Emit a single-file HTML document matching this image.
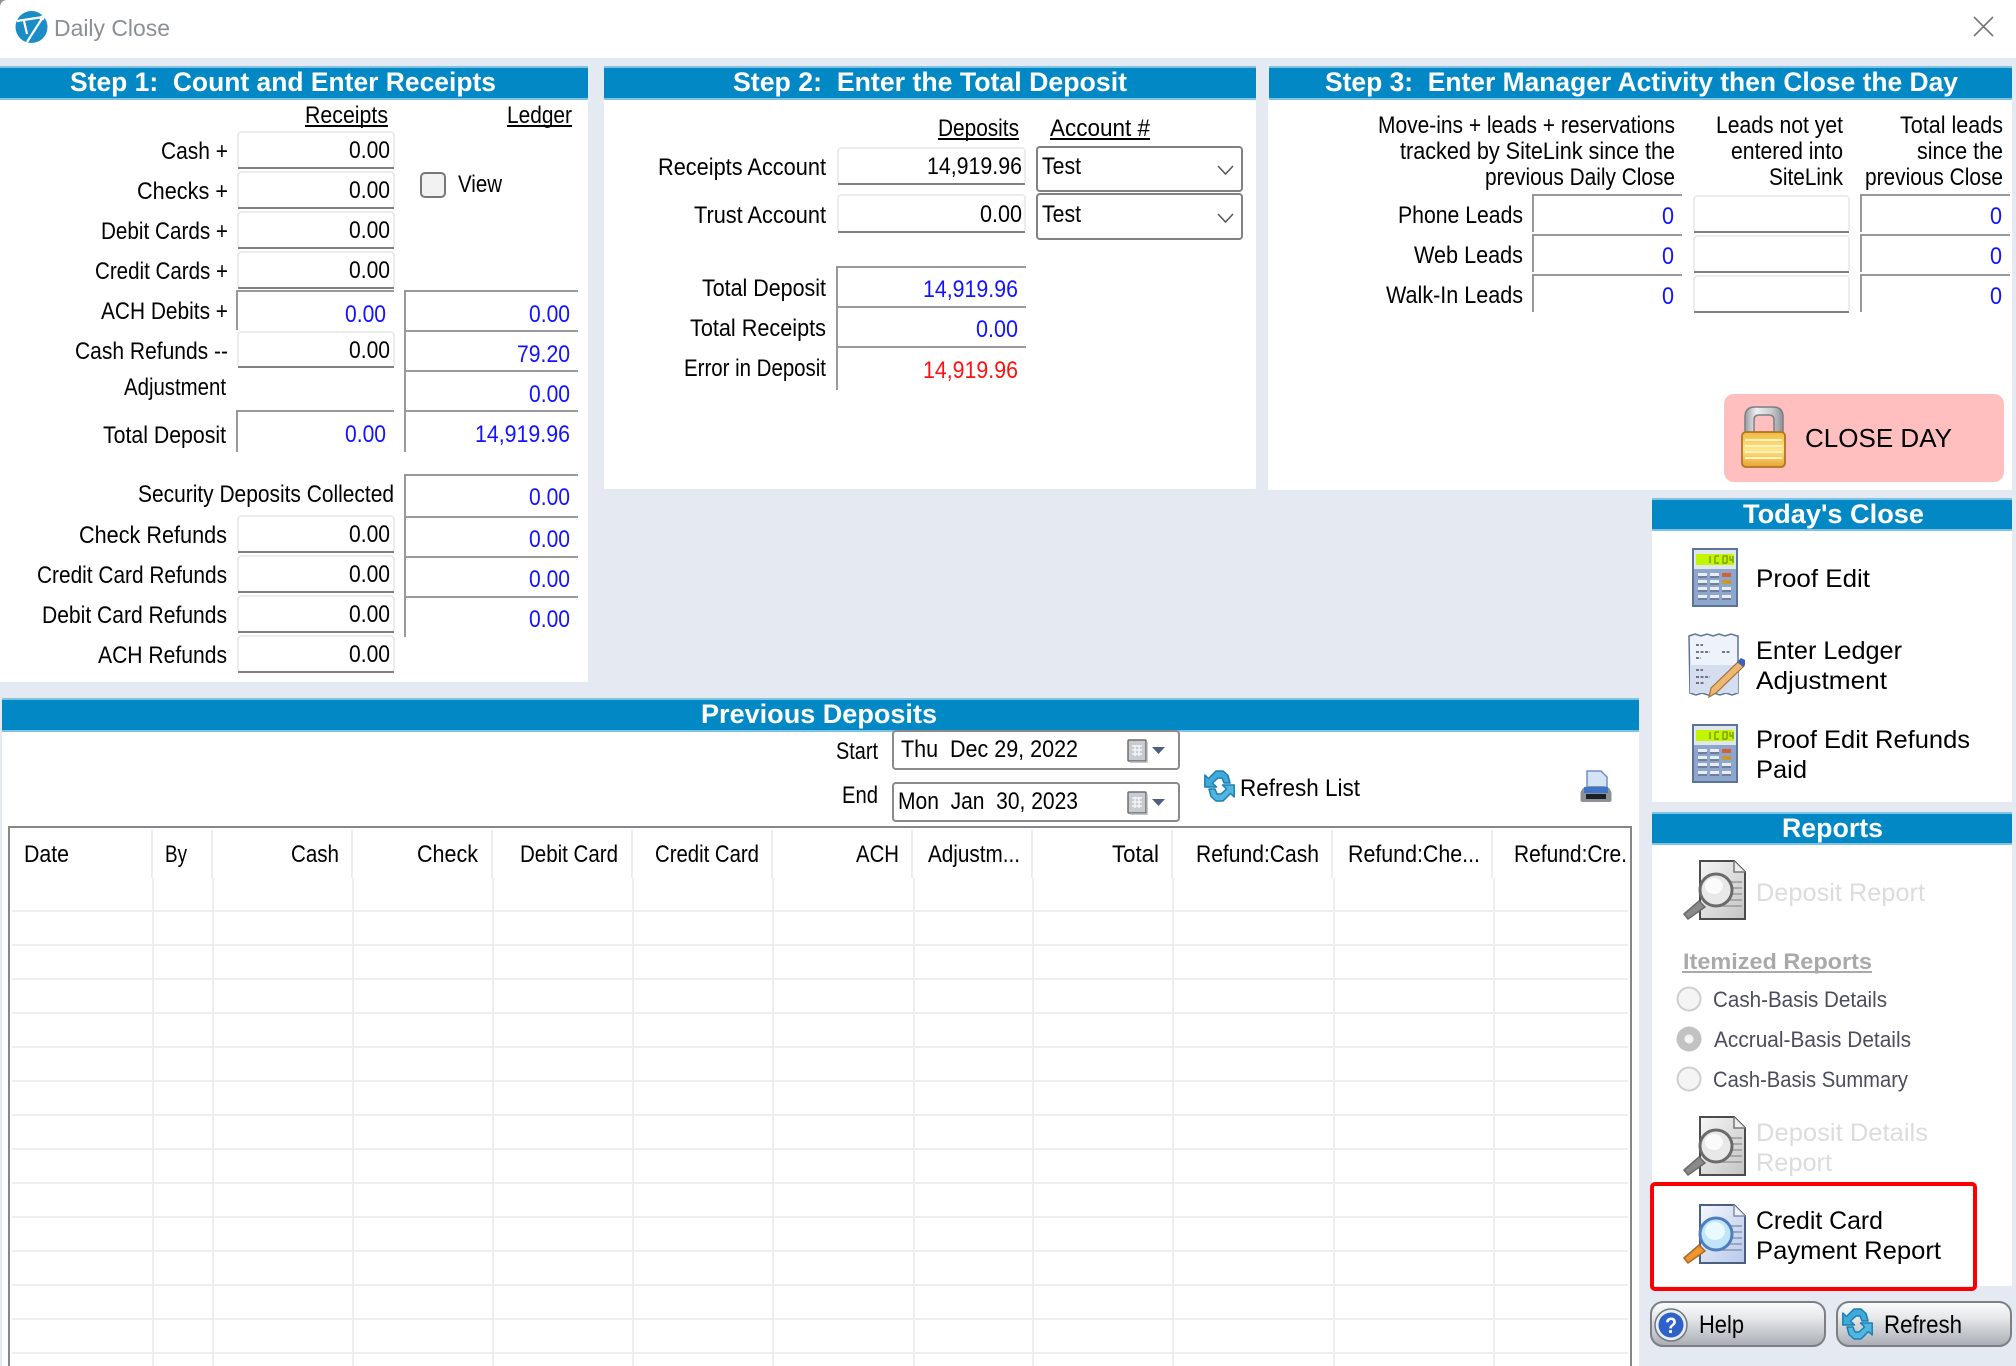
<!DOCTYPE html>
<html><head><meta charset="utf-8"><title>Daily Close</title>
<style>
html,body{margin:0;padding:0;background:#e4e9f2;width:2016px;height:1366px;overflow:hidden}
svg{display:block;position:absolute;left:0;top:0}
text{font-family:"Liberation Sans",Arial,sans-serif;font-size:24px;fill:#000;white-space:pre}
.h{font-size:27px;font-weight:700;fill:#fff}
.l{font-size:25px}
.b{fill:#1212ff}
.r{fill:#ff1010}
.d{font-size:25px;fill:#dcdcdc}
.g{font-size:22px;fill:#4c4c5c}
.hd{fill:#0288c5}
.edge{fill:#7fc2e2}
.ln{fill:#999}
.grid{fill:#eeeeee}
.inp{fill:#fff;stroke:#ececec;stroke-width:2}
.inb{fill:#808080}
</style></head><body>
<svg xmlns="http://www.w3.org/2000/svg" width="2016" height="1366" viewBox="0 0 2016 1366">
<defs>
<linearGradient id="btn" x1="0" y1="0" x2="0" y2="1"><stop offset="0" stop-color="#fbfcfc"/><stop offset=".35" stop-color="#e6e8ea"/><stop offset="1" stop-color="#a9adb3"/></linearGradient>
<linearGradient id="gold" x1="0" y1="0" x2="0" y2="1"><stop offset="0" stop-color="#f0b83c"/><stop offset=".5" stop-color="#fde68a"/><stop offset="1" stop-color="#e8a330"/></linearGradient>
<linearGradient id="steel" x1="0" y1="0" x2="1" y2="0"><stop offset="0" stop-color="#9a9ea2"/><stop offset=".3" stop-color="#eef0f2"/><stop offset=".7" stop-color="#c9cccf"/><stop offset="1" stop-color="#8d9195"/></linearGradient>
<linearGradient id="doccol" x1="0" y1="0" x2="1" y2="1"><stop offset="0" stop-color="#f4f7fd"/><stop offset="1" stop-color="#b7c8ea"/></linearGradient>
<linearGradient id="docgr" x1="0" y1="0" x2="1" y2="1"><stop offset="0" stop-color="#f6f6f6"/><stop offset="1" stop-color="#c4c4c4"/></linearGradient>
<g id="calc">
<rect x="0" y="0" width="46" height="59" fill="#5c7497"/>
<rect x="2" y="2" width="42" height="19" fill="#dfe6ee"/>
<rect x="4" y="6" width="38" height="11" fill="#c4f500"/>
<path d="M18 8v7M23 8v7h4M27 8h-4M31 8v7h4M31 8h4v7M38 8v4h3M41 8v7" stroke="#7da200" stroke-width="1.5" fill="none"/>
<rect x="2" y="21" width="42" height="36" fill="#8ea6cb"/>
<g fill="#e8edf5">
<rect x="6" y="25" width="9" height="4"/><rect x="18" y="25" width="9" height="4"/>
<rect x="6" y="32" width="9" height="4"/><rect x="18" y="32" width="9" height="4"/>
<rect x="6" y="39" width="9" height="4"/><rect x="18" y="39" width="9" height="4"/><rect x="30" y="39" width="9" height="4"/>
<rect x="6" y="47" width="9" height="4"/><rect x="18" y="47" width="9" height="4"/><rect x="30" y="47" width="9" height="4"/>
</g>
<g fill="#6d7f9c">
<rect x="6" y="28" width="9" height="2"/><rect x="18" y="28" width="9" height="2"/>
<rect x="6" y="35" width="9" height="2"/><rect x="18" y="35" width="9" height="2"/>
<rect x="6" y="42" width="9" height="2"/><rect x="18" y="42" width="9" height="2"/><rect x="30" y="42" width="9" height="2"/>
<rect x="6" y="50" width="9" height="2"/><rect x="18" y="50" width="9" height="2"/><rect x="30" y="50" width="9" height="2"/>
</g>
<rect x="30" y="25" width="9" height="4" fill="#d8602c"/>
<rect x="30" y="32" width="9" height="4" fill="#c89a2c"/>
</g>
<g id="magg">
<path d="M16 1H50L61 12V59H16Z" fill="url(#docgr)" stroke="#4c4c4c" stroke-width="2"/>
<path d="M50 1V12H61" fill="#eee" stroke="#777" stroke-width="1.5"/>
<path d="M40 22H58M44 28H58M46 34H58M44 40H58M28 46H58" stroke="#999" stroke-width="1.5" fill="none"/>
<path d="M0 54L4 59L21 47L15 41Z" fill="#8a8a8a" stroke="#6a6a6a" stroke-width="1.5"/>
<circle cx="32" cy="30" r="16" fill="#e8e8e8" stroke="#6a6a6a" stroke-width="3"/>
<ellipse cx="30" cy="26" rx="9" ry="8" fill="#fbfbfb"/>
</g>
<g id="magc">
<path d="M16 1H50L61 12V59H16Z" fill="url(#doccol)" stroke="#4b5f80" stroke-width="2"/>
<path d="M50 1V12H61" fill="#eef2fa" stroke="#7d8daa" stroke-width="1.5"/>
<path d="M40 22H58M44 28H58M46 34H58M44 40H58M28 46H58" stroke="#8797b3" stroke-width="1.5" fill="none"/>
<path d="M0 54L4 59L21 47L15 41Z" fill="#f0962c" stroke="#a8682a" stroke-width="1.5"/>
<circle cx="32" cy="30" r="16" fill="#bfe6f8" stroke="#4f7dbd" stroke-width="3"/>
<ellipse cx="31" cy="27" rx="10" ry="9" fill="#e9f9fe"/>
</g>
<g id="rfr">
<path id="rfa" d="M0.800 5L0.800 17L12.500 17L8.500 13L14 8L18 8L20 13L26 13L24 5.500L19 1L12 1L4.500 8.500Z" fill="#3fa9d8" stroke="#1c7fb0" stroke-width="1.5" stroke-linejoin="round"/>
<path d="M0.800 5L0.800 17L12.500 17L8.500 13L14 8L18 8L20 13L26 13L24 5.500L19 1L12 1L4.500 8.500Z" transform="rotate(180 15.500 16)" fill="#4fb6e2" stroke="#1c7fb0" stroke-width="1.5" stroke-linejoin="round"/>
</g>
<g id="cal">
<rect x="1" y="1" width="18" height="21" rx="1" fill="#c8ccd0" stroke="#6e6e6e" stroke-width="1.5"/>
<path d="M3 23H20V3" fill="none" stroke="#b5b5b5" stroke-width="1.5"/>
<path d="M5 7h10M5 11h10M5 15h10M8 6v11M12 6v11" stroke="#f4f4f4" stroke-width="1.5"/>
</g>
</defs>

<!-- background and panels -->
<rect width="2016" height="1366" fill="#e4e9f2"/>
<rect width="2016" height="58" fill="#fff"/>
<path d="M0 8Q0 0 8 0H0Z" fill="#8f9398"/>
<rect x="0" y="99" width="588" height="583" fill="#fff"/>
<rect x="604" y="99" width="652" height="390" fill="#fff"/>
<rect x="1268" y="99" width="744" height="391" fill="#fff"/>
<rect x="1652" y="531" width="360" height="271" fill="#fff"/>
<rect x="1652" y="845" width="360" height="441" fill="#fff"/>
<rect x="2" y="732" width="1637" height="634" fill="#fff"/>

<!-- headers -->
<rect class="edge" x="0" y="66" width="588" height="34"/><rect class="hd" x="0" y="68" width="588" height="30"/>
<rect class="edge" x="604" y="66" width="652" height="34"/><rect class="hd" x="604" y="68" width="652" height="30"/>
<rect class="edge" x="1269" y="66" width="743" height="34"/><rect class="hd" x="1269" y="68" width="743" height="30"/>
<rect class="edge" x="1652" y="498" width="360" height="33"/><rect class="hd" x="1652" y="500" width="360" height="29"/>
<rect class="edge" x="1652" y="812" width="360" height="33"/><rect class="hd" x="1652" y="814" width="360" height="29"/>
<rect class="edge" x="2" y="698" width="1637" height="34"/><rect class="hd" x="2" y="700" width="1637" height="30"/>

<text class="h" x="70" y="91" textLength="426" lengthAdjust="spacingAndGlyphs">Step 1:  Count and Enter Receipts</text>
<text class="h" x="733" y="91" textLength="394" lengthAdjust="spacingAndGlyphs">Step 2:  Enter the Total Deposit</text>
<text class="h" x="1325" y="91" textLength="633" lengthAdjust="spacingAndGlyphs">Step 3:  Enter Manager Activity then Close the Day</text>
<text class="h" x="1743" y="523" textLength="181" lengthAdjust="spacingAndGlyphs">Today's Close</text>
<text class="h" x="1782" y="837" textLength="101" lengthAdjust="spacingAndGlyphs">Reports</text>
<text class="h" x="701" y="723" textLength="236" lengthAdjust="spacingAndGlyphs">Previous Deposits</text>

<!-- title bar -->
<circle cx="31.500" cy="27" r="16" fill="#1a8cc6"/>
<path d="M17 21L43 17L27 42M24 21L27 34" fill="none" stroke="#fff" stroke-width="2.200"/>
<circle cx="42" cy="18" r="2.500" fill="#fff"/>
<text x="54" y="36" textLength="116" lengthAdjust="spacingAndGlyphs" style="font-size:23px;fill:#8a8f94">Daily Close</text>
<path d="M1974 17L1993 36M1993 17L1974 36" stroke="#777" stroke-width="1.600" fill="none"/>

<!-- STEP 1 -->
<text x="305" y="123" textLength="83" lengthAdjust="spacingAndGlyphs">Receipts</text><rect x="305" y="125" width="83" height="2"/>
<text x="507" y="123" textLength="65" lengthAdjust="spacingAndGlyphs">Ledger</text><rect x="507" y="125" width="65" height="2"/>

<text x="161" y="159" textLength="67" lengthAdjust="spacingAndGlyphs">Cash +</text>
<text x="137" y="199" textLength="91" lengthAdjust="spacingAndGlyphs">Checks +</text>
<text x="101" y="239" textLength="127" lengthAdjust="spacingAndGlyphs">Debit Cards +</text>
<text x="95" y="279" textLength="133" lengthAdjust="spacingAndGlyphs">Credit Cards +</text>
<text x="101" y="319" textLength="127" lengthAdjust="spacingAndGlyphs">ACH Debits +</text>
<text x="75" y="359" textLength="153" lengthAdjust="spacingAndGlyphs">Cash Refunds --</text>
<text x="124" y="395" textLength="102" lengthAdjust="spacingAndGlyphs">Adjustment</text>
<text x="103" y="443" textLength="123" lengthAdjust="spacingAndGlyphs">Total Deposit</text>
<text x="138" y="502" textLength="256" lengthAdjust="spacingAndGlyphs">Security Deposits Collected</text>
<text x="79" y="543" textLength="148" lengthAdjust="spacingAndGlyphs">Check Refunds</text>
<text x="37" y="583" textLength="190" lengthAdjust="spacingAndGlyphs">Credit Card Refunds</text>
<text x="42" y="623" textLength="185" lengthAdjust="spacingAndGlyphs">Debit Card Refunds</text>
<text x="98" y="663" textLength="129" lengthAdjust="spacingAndGlyphs">ACH Refunds</text>

<!-- step 1 inputs -->
<g>
<rect class="inp" x="238" y="132" width="156" height="36" rx="3"/><rect class="inb" x="238" y="167" width="156" height="2"/>
<rect class="inp" x="238" y="172" width="156" height="36" rx="3"/><rect class="inb" x="238" y="207" width="156" height="2"/>
<rect class="inp" x="238" y="212" width="156" height="36" rx="3"/><rect class="inb" x="238" y="247" width="156" height="2"/>
<rect class="inp" x="238" y="252" width="156" height="36" rx="3"/><rect class="inb" x="238" y="287" width="156" height="2"/>
<rect class="inp" x="238" y="332" width="156" height="35" rx="3"/><rect class="inb" x="238" y="366" width="156" height="2"/>
<rect class="inp" x="238" y="516" width="156" height="36" rx="3"/><rect class="inb" x="238" y="551" width="156" height="2"/>
<rect class="inp" x="238" y="556" width="156" height="36" rx="3"/><rect class="inb" x="238" y="591" width="156" height="2"/>
<rect class="inp" x="238" y="596" width="156" height="36" rx="3"/><rect class="inb" x="238" y="631" width="156" height="2"/>
<rect class="inp" x="238" y="636" width="156" height="36" rx="3"/><rect class="inb" x="238" y="671" width="156" height="2"/>
</g>
<text x="349" y="158" textLength="41" lengthAdjust="spacingAndGlyphs">0.00</text>
<text x="349" y="198" textLength="41" lengthAdjust="spacingAndGlyphs">0.00</text>
<text x="349" y="238" textLength="41" lengthAdjust="spacingAndGlyphs">0.00</text>
<text x="349" y="278" textLength="41" lengthAdjust="spacingAndGlyphs">0.00</text>
<text x="349" y="358" textLength="41" lengthAdjust="spacingAndGlyphs">0.00</text>
<text x="349" y="542" textLength="41" lengthAdjust="spacingAndGlyphs">0.00</text>
<text x="349" y="582" textLength="41" lengthAdjust="spacingAndGlyphs">0.00</text>
<text x="349" y="622" textLength="41" lengthAdjust="spacingAndGlyphs">0.00</text>
<text x="349" y="662" textLength="41" lengthAdjust="spacingAndGlyphs">0.00</text>

<!-- view checkbox -->
<rect x="421" y="173" width="24" height="24" rx="4" fill="#f2f2f2" stroke="#777" stroke-width="2"/>
<text x="458" y="192" textLength="44" lengthAdjust="spacingAndGlyphs">View</text>

<!-- step 1 read-only boxes -->
<rect class="ln" x="236" y="290" width="158" height="2"/><rect class="ln" x="236" y="290" width="2" height="40"/>
<rect class="ln" x="236" y="410" width="158" height="2"/><rect class="ln" x="236" y="410" width="2" height="42"/>
<text class="b" x="345" y="322" textLength="41" lengthAdjust="spacingAndGlyphs">0.00</text>
<text class="b" x="345" y="442" textLength="41" lengthAdjust="spacingAndGlyphs">0.00</text>

<rect class="ln" x="404" y="290" width="174" height="2"/><rect class="ln" x="404" y="330" width="174" height="2"/><rect class="ln" x="404" y="370" width="174" height="2"/><rect class="ln" x="404" y="410" width="174" height="2"/><rect class="ln" x="404" y="290" width="2" height="162"/>
<text class="b" x="529" y="322" textLength="41" lengthAdjust="spacingAndGlyphs">0.00</text>
<text class="b" x="517" y="362" textLength="53" lengthAdjust="spacingAndGlyphs">79.20</text>
<text class="b" x="529" y="402" textLength="41" lengthAdjust="spacingAndGlyphs">0.00</text>
<text class="b" x="475" y="442" textLength="95" lengthAdjust="spacingAndGlyphs">14,919.96</text>

<rect class="ln" x="404" y="474" width="174" height="2"/><rect class="ln" x="404" y="516" width="174" height="2"/><rect class="ln" x="404" y="556" width="174" height="2"/><rect class="ln" x="404" y="596" width="174" height="2"/><rect class="ln" x="404" y="474" width="2" height="163"/>
<text class="b" x="529" y="505" textLength="41" lengthAdjust="spacingAndGlyphs">0.00</text>
<text class="b" x="529" y="547" textLength="41" lengthAdjust="spacingAndGlyphs">0.00</text>
<text class="b" x="529" y="587" textLength="41" lengthAdjust="spacingAndGlyphs">0.00</text>
<text class="b" x="529" y="627" textLength="41" lengthAdjust="spacingAndGlyphs">0.00</text>

<!-- STEP 2 -->
<text x="938" y="136" textLength="81" lengthAdjust="spacingAndGlyphs">Deposits</text><rect x="938" y="138" width="81" height="2"/>
<text x="1050" y="136" textLength="100" lengthAdjust="spacingAndGlyphs">Account #</text><rect x="1050" y="138" width="100" height="2"/>
<text x="658" y="175" textLength="168" lengthAdjust="spacingAndGlyphs">Receipts Account</text>
<text x="694" y="223" textLength="132" lengthAdjust="spacingAndGlyphs">Trust Account</text>
<rect class="inp" x="838" y="148" width="187" height="36" rx="3"/><rect class="inb" x="838" y="183" width="187" height="2"/>
<rect class="inp" x="838" y="195" width="187" height="37" rx="3"/><rect class="inb" x="838" y="231" width="187" height="2"/>
<text x="927" y="174" textLength="95" lengthAdjust="spacingAndGlyphs">14,919.96</text>
<text x="980" y="222" textLength="42" lengthAdjust="spacingAndGlyphs">0.00</text>
<rect x="1037" y="147" width="205" height="44" rx="3" fill="#fff" stroke="#808080" stroke-width="2"/>
<rect x="1037" y="194" width="205" height="45" rx="3" fill="#fff" stroke="#808080" stroke-width="2"/>
<text x="1042" y="174" textLength="39" lengthAdjust="spacingAndGlyphs">Test</text>
<text x="1042" y="222" textLength="39" lengthAdjust="spacingAndGlyphs">Test</text>
<path d="M1218 166L1225.500 174L1233 166M1218 214L1225.500 222L1233 214" fill="none" stroke="#555" stroke-width="1.500"/>

<rect class="ln" x="836" y="266" width="190" height="2"/><rect class="ln" x="836" y="306" width="190" height="2"/><rect class="ln" x="836" y="346" width="190" height="2"/><rect class="ln" x="836" y="266" width="2" height="124"/>
<text x="702" y="296" textLength="124" lengthAdjust="spacingAndGlyphs">Total Deposit</text>
<text x="690" y="336" textLength="136" lengthAdjust="spacingAndGlyphs">Total Receipts</text>
<text x="684" y="376" textLength="142" lengthAdjust="spacingAndGlyphs">Error in Deposit</text>
<text class="b" x="923" y="297" textLength="95" lengthAdjust="spacingAndGlyphs">14,919.96</text>
<text class="b" x="976" y="337" textLength="42" lengthAdjust="spacingAndGlyphs">0.00</text>
<text class="r" x="923" y="378" textLength="95" lengthAdjust="spacingAndGlyphs">14,919.96</text>

<!-- STEP 3 -->
<text x="1378" y="133" textLength="297" lengthAdjust="spacingAndGlyphs">Move-ins + leads + reservations</text>
<text x="1400" y="159" textLength="275" lengthAdjust="spacingAndGlyphs">tracked by SiteLink since the</text>
<text x="1485" y="185" textLength="190" lengthAdjust="spacingAndGlyphs">previous Daily Close</text>
<text x="1716" y="133" textLength="127" lengthAdjust="spacingAndGlyphs">Leads not yet</text>
<text x="1731" y="159" textLength="112" lengthAdjust="spacingAndGlyphs">entered into</text>
<text x="1769" y="185" textLength="74" lengthAdjust="spacingAndGlyphs">SiteLink</text>
<text x="1900" y="133" textLength="103" lengthAdjust="spacingAndGlyphs">Total leads</text>
<text x="1917" y="159" textLength="86" lengthAdjust="spacingAndGlyphs">since the</text>
<text x="1865" y="185" textLength="138" lengthAdjust="spacingAndGlyphs">previous Close</text>
<text x="1398" y="223" textLength="125" lengthAdjust="spacingAndGlyphs">Phone Leads</text>
<text x="1414" y="263" textLength="109" lengthAdjust="spacingAndGlyphs">Web Leads</text>
<text x="1386" y="303" textLength="137" lengthAdjust="spacingAndGlyphs">Walk-In Leads</text>
<g class="ln">
<rect x="1532" y="194" width="150" height="2"/><rect x="1532" y="194" width="2" height="38"/>
<rect x="1532" y="234" width="150" height="2"/><rect x="1532" y="234" width="2" height="38"/>
<rect x="1532" y="274" width="150" height="2"/><rect x="1532" y="274" width="2" height="38"/>
<rect x="1860" y="194" width="150" height="2"/><rect x="1860" y="194" width="2" height="38"/>
<rect x="1860" y="234" width="150" height="2"/><rect x="1860" y="234" width="2" height="38"/>
<rect x="1860" y="274" width="150" height="2"/><rect x="1860" y="274" width="2" height="38"/>
</g>
<text class="b" x="1662" y="224" textLength="12" lengthAdjust="spacingAndGlyphs">0</text>
<text class="b" x="1662" y="264" textLength="12" lengthAdjust="spacingAndGlyphs">0</text>
<text class="b" x="1662" y="304" textLength="12" lengthAdjust="spacingAndGlyphs">0</text>
<text class="b" x="1990" y="224" textLength="12" lengthAdjust="spacingAndGlyphs">0</text>
<text class="b" x="1990" y="264" textLength="12" lengthAdjust="spacingAndGlyphs">0</text>
<text class="b" x="1990" y="304" textLength="12" lengthAdjust="spacingAndGlyphs">0</text>
<rect class="inp" x="1694" y="196" width="155" height="36" rx="3"/><rect class="inb" x="1694" y="231" width="155" height="2"/>
<rect class="inp" x="1694" y="236" width="155" height="36" rx="3"/><rect class="inb" x="1694" y="271" width="155" height="2"/>
<rect class="inp" x="1694" y="276" width="155" height="36" rx="3"/><rect class="inb" x="1694" y="311" width="155" height="2"/>

<!-- close day -->
<rect x="1724" y="394" width="280" height="88" rx="10" fill="#ffbfbf"/>
<path d="M1745 433V417Q1745 407 1755 407H1773Q1783 407 1783 417V433H1774V420Q1774 415 1769 415H1759Q1754 415 1754 420V433Z" fill="url(#steel)" stroke="#7b7f83" stroke-width="1.500"/>
<rect x="1742" y="432" width="43" height="35" rx="4" fill="url(#gold)" stroke="#b07424" stroke-width="1.800"/>
<path d="M1745 440H1782M1745 446H1782M1745 452H1782M1745 458H1782" stroke="#fff2bd" stroke-width="2"/>
<text x="1805" y="447" textLength="147" lengthAdjust="spacingAndGlyphs" style="font-size:26px">CLOSE DAY</text>

<!-- today's close -->
<use href="#calc" x="1692" y="548"/>
<text class="l" x="1756" y="587" textLength="114" lengthAdjust="spacingAndGlyphs">Proof Edit</text>
<path d="M1689 636l6 -2 6 2 6 -2 6 2 6 -2 6 2 6 -2 6 2 1 0V693l-6 2 -6 -2 -6 2 -6 -2 -6 2 -6 -2 -6 2 -6 -2Z" fill="#eef3fb" stroke="#5c7497" stroke-width="1.500"/>
<rect x="1690" y="665" width="48" height="28" fill="#d5deee"/>
<path d="M1696 645h7M1696 652h14M1696 658h5M1722 652h8M1696 670h7M1696 677h14M1696 683h8" stroke="#667" stroke-width="1.800" stroke-dasharray="3 1.500" fill="none"/>
<path d="M1709 697L1711 688L1739 661L1744 666L1716 693Z" fill="#eeb673" stroke="#a5702f" stroke-width="1.200"/>
<path d="M1737 662L1741 658L1745 660L1745 665L1743 667Z" fill="#3d63b8"/>
<text class="l" x="1756" y="659" textLength="146" lengthAdjust="spacingAndGlyphs">Enter Ledger</text>
<text class="l" x="1756" y="689" textLength="131" lengthAdjust="spacingAndGlyphs">Adjustment</text>
<use href="#calc" x="1692" y="724"/>
<text class="l" x="1756" y="748" textLength="214" lengthAdjust="spacingAndGlyphs">Proof Edit Refunds</text>
<text class="l" x="1756" y="778" textLength="51" lengthAdjust="spacingAndGlyphs">Paid</text>

<!-- reports -->
<use href="#magg" x="1684" y="860"/>
<text class="d" x="1756" y="901" textLength="169" lengthAdjust="spacingAndGlyphs">Deposit Report</text>
<text x="1683" y="969" textLength="189" lengthAdjust="spacingAndGlyphs" style="font-size:22px;font-weight:700;fill:#a9a9a9">Itemized Reports</text>
<rect x="1682" y="971" width="190" height="2" fill="#a9a9a9"/>
<circle cx="1689" cy="999" r="11.500" fill="#f4f4f4" stroke="#cfcfcf" stroke-width="2"/>
<circle cx="1689" cy="1039" r="12.500" fill="#c2c2c2"/><circle cx="1689" cy="1039" r="4.500" fill="#f4f4f4"/>
<circle cx="1689" cy="1079" r="11.500" fill="#f4f4f4" stroke="#cfcfcf" stroke-width="2"/>
<text class="g" x="1713" y="1007" textLength="174" lengthAdjust="spacingAndGlyphs">Cash-Basis Details</text>
<text class="g" x="1714" y="1047" textLength="197" lengthAdjust="spacingAndGlyphs">Accrual-Basis Details</text>
<text class="g" x="1713" y="1087" textLength="195" lengthAdjust="spacingAndGlyphs">Cash-Basis Summary</text>
<use href="#magg" x="1684" y="1116"/>
<text class="d" x="1756" y="1141" textLength="172" lengthAdjust="spacingAndGlyphs">Deposit Details</text>
<text class="d" x="1756" y="1171" textLength="76" lengthAdjust="spacingAndGlyphs">Report</text>
<use href="#magc" x="1684" y="1204"/>
<text class="l" x="1756" y="1229" textLength="127" lengthAdjust="spacingAndGlyphs">Credit Card</text>
<text class="l" x="1756" y="1259" textLength="185" lengthAdjust="spacingAndGlyphs">Payment Report</text>
<rect x="1652" y="1184" width="323" height="105" rx="3" fill="none" stroke="#fa0000" stroke-width="4"/>

<!-- buttons -->
<rect x="1651" y="1302" width="174" height="44" rx="12" fill="url(#btn)" stroke="#7d7f82" stroke-width="2"/>
<rect x="1837" y="1302" width="174" height="44" rx="12" fill="url(#btn)" stroke="#7d7f82" stroke-width="2"/>
<circle cx="1671" cy="1325" r="16" fill="#e8edf5" stroke="#74787e" stroke-width="1.500"/>
<circle cx="1671" cy="1325" r="12.500" fill="#2f62c9"/>
<text x="1665" y="1333" textLength="12" lengthAdjust="spacingAndGlyphs" style="font-size:22px;font-weight:700;fill:#fff">?</text>
<text class="l" x="1699" y="1333" textLength="45" lengthAdjust="spacingAndGlyphs">Help</text>
<use href="#rfr" x="1842" y="1308"/>
<text class="l" x="1884" y="1333" textLength="78" lengthAdjust="spacingAndGlyphs">Refresh</text>

<!-- previous deposits controls -->
<text x="836" y="759" textLength="42" lengthAdjust="spacingAndGlyphs">Start</text>
<text x="842" y="803" textLength="36" lengthAdjust="spacingAndGlyphs">End</text>
<rect x="893" y="731" width="286" height="38" rx="3" fill="#fff" stroke="#8a8a8a" stroke-width="2"/>
<rect x="893" y="783" width="286" height="38" rx="3" fill="#fff" stroke="#8a8a8a" stroke-width="2"/>
<text x="901" y="757" textLength="177" lengthAdjust="spacingAndGlyphs">Thu  Dec 29, 2022</text>
<text x="898" y="809" textLength="180" lengthAdjust="spacingAndGlyphs">Mon  Jan  30, 2023</text>
<use href="#cal" x="1127" y="739"/><path d="M1152 747H1165L1158.500 754Z" fill="#4f5f80"/>
<use href="#cal" x="1127" y="791"/><path d="M1152 799H1165L1158.500 806Z" fill="#4f5f80"/>
<use href="#rfr" x="1204" y="770"/>
<text x="1240" y="796" textLength="120" lengthAdjust="spacingAndGlyphs">Refresh List</text>
<path d="M1587 771H1601L1607 777V790H1587Z" fill="#d6e2f6" stroke="#6f8fc9" stroke-width="1.500"/>
<path d="M1580.500 794Q1581 787 1589 786H1604Q1611 787 1611.500 794V801Q1611 802 1608 802H1584Q1581 802 1580.500 801Z" fill="#8d9095"/>
<rect x="1584" y="787" width="24" height="6" fill="#3f74cc"/>
<rect x="1586" y="794" width="20" height="5" fill="#1d2023"/>

<!-- table -->
<rect x="9" y="827" width="1622" height="539" fill="#fff"/>
<rect x="8" y="826" width="1624" height="2" fill="#85878f"/>
<rect x="8" y="826" width="2" height="540" fill="#85878f"/>
<rect x="1630" y="826" width="2" height="540" fill="#85878f"/>
<g class="grid">
<rect x="151" y="830" width="2" height="48"/><rect x="211" y="830" width="2" height="48"/><rect x="351" y="830" width="2" height="48"/><rect x="491" y="830" width="2" height="48"/><rect x="631" y="830" width="2" height="48"/><rect x="771" y="830" width="2" height="48"/><rect x="911" y="830" width="2" height="48"/><rect x="1031" y="830" width="2" height="48"/><rect x="1171" y="830" width="2" height="48"/><rect x="1331" y="830" width="2" height="48"/><rect x="1491" y="830" width="2" height="48"/>
<rect x="152" y="878" width="2" height="488"/><rect x="212" y="878" width="2" height="488"/><rect x="352" y="878" width="2" height="488"/><rect x="492" y="878" width="2" height="488"/><rect x="632" y="878" width="2" height="488"/><rect x="772" y="878" width="2" height="488"/><rect x="913" y="878" width="2" height="488"/><rect x="1032" y="878" width="2" height="488"/><rect x="1172" y="878" width="2" height="488"/><rect x="1333" y="878" width="2" height="488"/><rect x="1493" y="878" width="2" height="488"/>
<rect x="12" y="910" width="1616" height="2"/><rect x="12" y="944" width="1616" height="2"/><rect x="12" y="978" width="1616" height="2"/><rect x="12" y="1012" width="1616" height="2"/><rect x="12" y="1046" width="1616" height="2"/><rect x="12" y="1080" width="1616" height="2"/><rect x="12" y="1114" width="1616" height="2"/><rect x="12" y="1148" width="1616" height="2"/><rect x="12" y="1182" width="1616" height="2"/><rect x="12" y="1216" width="1616" height="2"/><rect x="12" y="1250" width="1616" height="2"/><rect x="12" y="1284" width="1616" height="2"/><rect x="12" y="1318" width="1616" height="2"/><rect x="12" y="1352" width="1616" height="2"/>
</g>
<text x="24" y="862" textLength="45" lengthAdjust="spacingAndGlyphs">Date</text>
<text x="165" y="862" textLength="22" lengthAdjust="spacingAndGlyphs">By</text>
<text x="291" y="862" textLength="48" lengthAdjust="spacingAndGlyphs">Cash</text>
<text x="417" y="862" textLength="61" lengthAdjust="spacingAndGlyphs">Check</text>
<text x="520" y="862" textLength="98" lengthAdjust="spacingAndGlyphs">Debit Card</text>
<text x="655" y="862" textLength="104" lengthAdjust="spacingAndGlyphs">Credit Card</text>
<text x="856" y="862" textLength="43" lengthAdjust="spacingAndGlyphs">ACH</text>
<text x="928" y="862" textLength="92" lengthAdjust="spacingAndGlyphs">Adjustm...</text>
<text x="1112" y="862" textLength="47" lengthAdjust="spacingAndGlyphs">Total</text>
<text x="1196" y="862" textLength="123" lengthAdjust="spacingAndGlyphs">Refund:Cash</text>
<text x="1348" y="862" textLength="132" lengthAdjust="spacingAndGlyphs">Refund:Che...</text>
<text x="1514" y="862" textLength="113" lengthAdjust="spacingAndGlyphs">Refund:Cre.</text>
</svg>
</body></html>
